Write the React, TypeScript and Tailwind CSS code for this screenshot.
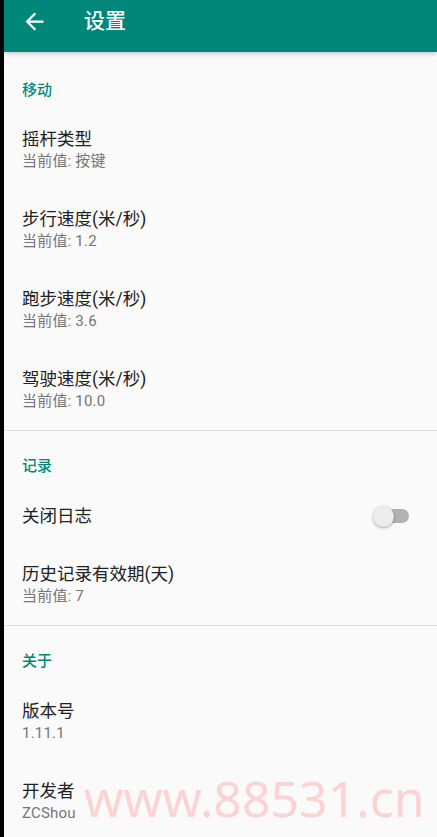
import React from 'react';

const FONT = "font-['Roboto','Noto_Sans_CJK_SC',sans-serif]";

type Item = { title: string; value?: string; toggle?: boolean };
type Section = { name: string; items: Item[] };

const sections: Section[] = [
  {
    name: '移动',
    items: [
      { title: '摇杆类型', value: '当前值: 按键' },
      { title: '步行速度(米/秒)', value: '当前值: 1.2' },
      { title: '跑步速度(米/秒)', value: '当前值: 3.6' },
      { title: '驾驶速度(米/秒)', value: '当前值: 10.0' },
    ],
  },
  {
    name: '记录',
    items: [
      { title: '关闭日志', toggle: true },
      { title: '历史记录有效期(天)', value: '当前值: 7' },
    ],
  },
  {
    name: '关于',
    items: [
      { title: '版本号', value: '1.11.1' },
      { title: '开发者', value: 'ZCShou' },
    ],
  },
];

function Switch() {
  return (
    <span className="relative mr-[28px] inline-flex h-[20px] w-[36px] items-center">
      <span className="absolute right-0 h-[14px] w-[30px] rounded-full bg-[#b2b2b2]" />
      <span className="absolute left-0 h-[21px] w-[21px] rounded-full bg-[#ececec] shadow-[0_1px_3px_rgba(0,0,0,0.35)]" />
    </span>
  );
}

function Row({ item }: { item: Item }) {
  if (item.toggle) {
    return (
      <div className="flex h-[58px] items-center justify-between pl-[18px]">
        <span className="text-[17.5px] leading-[22px] text-[#212121]">{item.title}</span>
        <Switch />
      </div>
    );
  }
  return (
    <div className="h-[80px] pl-[18px] pt-[18px]">
      <div className="text-[17.5px] leading-[22px] text-[#212121]">{item.title}</div>
      <div className="text-[15px] leading-[23px] tracking-[0.2px] text-[#757575]">{item.value}</div>
    </div>
  );
}

export default function App() {
  return (
    <div className={`relative flex h-[837px] w-[437px] overflow-hidden bg-[#fafafa] ${FONT}`}>
      <div className="w-[4px] shrink-0 bg-black" />
      <div className="relative flex min-w-0 flex-1 flex-col">
        <header className="relative z-10 flex h-[52px] shrink-0 items-start bg-[#00877a] pt-[8px] shadow-[0_2px_4px_rgba(0,0,0,0.18)]">
          <svg
            viewBox="0 0 24 24"
            className="ml-[17px] h-[27px] w-[27px] fill-white"
            aria-hidden="true"
          >
            <path d="M20 11H7.83l5.59-5.59L12 4l-8 8 8 8 1.41-1.41L7.83 13H20v-2z" />
          </svg>
          <span className="ml-[36px] text-[21px] font-medium leading-[27px] text-white">设置</span>
        </header>

        {sections.map((section, i) => (
          <div key={section.name}>
            {i > 0 && <div className="h-px bg-[#dedede]" />}
            <div
              className={
                i === 0
                  ? 'h-[58px] pl-[18px] pt-[28px] text-[15px] font-medium leading-[20px] text-[#00897b]'
                  : 'h-[56px] pl-[18px] pt-[25px] text-[15px] font-medium leading-[20px] text-[#00897b]'
              }
            >
              {section.name}
            </div>
            {section.items.map((item) => (
              <Row key={item.title} item={item} />
            ))}
          </div>
        ))}

        <div className="pointer-events-none absolute left-[80px] top-[768px] text-[50px] leading-[60px] text-[#fdd2d2] font-['Noto_Sans',sans-serif]">
          www.88531.cn
        </div>
      </div>
    </div>
  );
}
